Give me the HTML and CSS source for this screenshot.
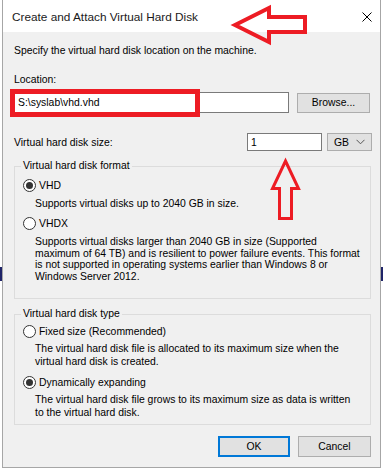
FILE: index.html
```html
<!DOCTYPE html>
<html>
<head>
<meta charset="utf-8">
<title>Create and Attach Virtual Hard Disk</title>
<link rel="stylesheet" href="styles.css">
</head>
<body>
<div class="screen">
  <div class="dialog">
    <div class="titlebar">
      <span class="title">Create and Attach Virtual Hard Disk</span>
      <svg class="close" width="10" height="10" viewBox="0 0 10 10"><path d="M0.5 0.5 L9.5 9.5 M9.5 0.5 L0.5 9.5" stroke="#000" stroke-width="1" fill="none"/></svg>
    </div>
    <div class="content">
      <div class="intro">Specify the virtual hard disk location on the machine.</div>
      <div class="label loc-label">Location:</div>
      <div class="loc-row">
        <div class="textbox path">S:\syslab\vhd.vhd</div>
        <div class="button browse">Browse...</div>
        <div class="highlight"></div>
      </div>
      <div class="size-row">
        <div class="size-label">Virtual hard disk size:</div>
        <div class="textbox size">1</div>
        <div class="combo"><span>GB</span><svg width="9" height="6" viewBox="0 0 9 6"><path d="M0.5 0.8 L4.5 4.8 L8.5 0.8" stroke="#555" stroke-width="1" fill="none"/></svg></div>
      </div>
      <fieldset class="group format">
        <legend>Virtual hard disk format</legend>
        <div class="radio-row first"><span class="radio checked"></span>VHD</div>
        <div class="desc one">Supports virtual disks up to 2040 GB in size.</div>
        <div class="radio-row"><span class="radio"></span>VHDX</div>
        <div class="desc vhdx">Supports virtual disks larger than 2040 GB in size (Supported<br>maximum of 64 TB) and is resilient to power failure events. This format<br>is not supported in operating systems earlier than Windows 8 or<br>Windows Server 2012.</div>
      </fieldset>
      <fieldset class="group type">
        <legend>Virtual hard disk type</legend>
        <div class="radio-row first"><span class="radio"></span>Fixed size (Recommended)</div>
        <div class="desc two">The virtual hard disk file is allocated to its maximum size when the<br>virtual hard disk is created.</div>
        <div class="radio-row dyn"><span class="radio checked"></span>Dynamically expanding</div>
        <div class="desc two">The virtual hard disk file grows to its maximum size as data is written<br>to the virtual hard disk.</div>
      </fieldset>
      <div class="buttons">
        <div class="button ok">OK</div>
        <div class="button cancel">Cancel</div>
      </div>
    </div>
  </div>
  <div class="edge edge-left"></div>
  <div class="edge edge-right"></div>
  <svg class="annotations" width="383" height="471" viewBox="0 0 383 471">
    <path d="M235 25 L269 8 L269 17 L305 17 L305 32 L269 32 L269 42 Z" fill="none" stroke="#ed1c24" stroke-width="4" stroke-linejoin="miter"/>
    <path d="M285.5 161 L298.5 188.5 L291.5 188.5 L291.5 218.5 L279.5 218.5 L279.5 188.5 L272.5 188.5 Z" fill="none" stroke="#ed1c24" stroke-width="3" stroke-linejoin="miter"/>
  </svg>
</div>
</body>
</html>
```
FILE: styles.css
```css
* { box-sizing: border-box; }
html, body { margin: 0; padding: 0; background: #ffffff; }
body {
  font-family: "Liberation Sans", Arial, sans-serif;
  font-size: 10.4px;
  color: #000;
}
.screen {
  position: relative;
  width: 383px;
  height: 471px;
  overflow: hidden;
}
.dialog {
  margin-left: 2px;
  width: 379px;
  border: 1px solid #a6a6a6;
  border-top: none;
  background: #f0f0f0;
}
.titlebar {
  height: 32px;
  background: #ffffff;
  display: flex;
  align-items: center;
  padding-left: 9px;
  padding-right: 8px;
}
.title {
  flex: 1;
  font-size: 11.8px;
  color: #1a1a1a;
  padding-top: 2px;
}
.close { display: block; margin-top: 2px; }
.content {
  padding: 12px 8px 10px 11px;
}
.intro { line-height: 14px; }
.label { line-height: 14px; }
.loc-label { margin-top: 15px; }
.loc-row {
  position: relative;
  margin-top: 5px;
  display: flex;
  align-items: center;
  gap: 8px;
}
.textbox {
  background: #fff;
  border: 1px solid #7a7a7a;
  display: flex;
  align-items: center;
  padding-left: 3px;
}
.path { width: 275px; height: 21px; }
.button {
  background: #e1e1e1;
  border: 1px solid #adadad;
  display: flex;
  align-items: center;
  justify-content: center;
}
.browse { width: 73px; height: 20px; }
.highlight {
  position: absolute;
  left: -4px;
  top: -3px;
  width: 190px;
  height: 28px;
  border: 5px solid #ed1c24;
}
.size-row {
  margin-top: 20px;
  display: flex;
  align-items: center;
  gap: 5px;
  height: 18px;
}
.size-label { flex: 1; }
.size { width: 75px; height: 18px; }
.combo {
  width: 45px;
  height: 18px;
  background: #e1e1e1;
  border: 1px solid #adadad;
  display: flex;
  align-items: center;
  justify-content: space-between;
  padding: 0 6px 0 6px;
}
.combo svg { display: block; }
.group {
  margin: 9px 1px 0 0;
  border: 1px solid #dcdcdc;
  padding: 0 4px 16px 8px;
  min-width: 0;
}
.group legend {
  padding: 0 2px;
  margin-left: -2px;
  line-height: 12px;
}
.type { margin-top: 9px; padding-bottom: 5px; }
.radio-row {
  display: flex;
  align-items: center;
  height: 14px;
  margin-top: 6px;
}
.type .radio-row.first { margin-top: 4px; }
.type .radio-row.dyn { margin-top: 7px; }
.radio {
  width: 13px;
  height: 13px;
  border: 1px solid #333;
  border-radius: 50%;
  background: #fff;
  margin-right: 3px;
  display: flex;
  align-items: center;
  justify-content: center;
}
.radio.checked::after {
  content: "";
  width: 7px;
  height: 7px;
  border-radius: 50%;
  background: #333;
}
.desc {
  margin-left: 12px;
  margin-top: 6px;
  line-height: 12px;
}
.desc.vhdx { line-height: 11.6px; margin-top: 6px; }
.desc.two { line-height: 12.5px; margin-top: 5px; }
.buttons {
  margin-top: 11px;
  display: flex;
  justify-content: flex-end;
  gap: 8px;
  padding-right: 1px;
}
.ok { width: 72px; height: 21px; border: 2px solid #0078d7; }
.cancel { width: 73px; height: 21px; }
.edge {
  position: absolute;
  width: 2px;
  top: 267px;
  height: 14px;
  background: #1f2468;
}
.edge-left { left: 0; }
.edge-right { left: 381px; }
.annotations {
  position: absolute;
  left: 0;
  top: 0;
  pointer-events: none;
}
```
